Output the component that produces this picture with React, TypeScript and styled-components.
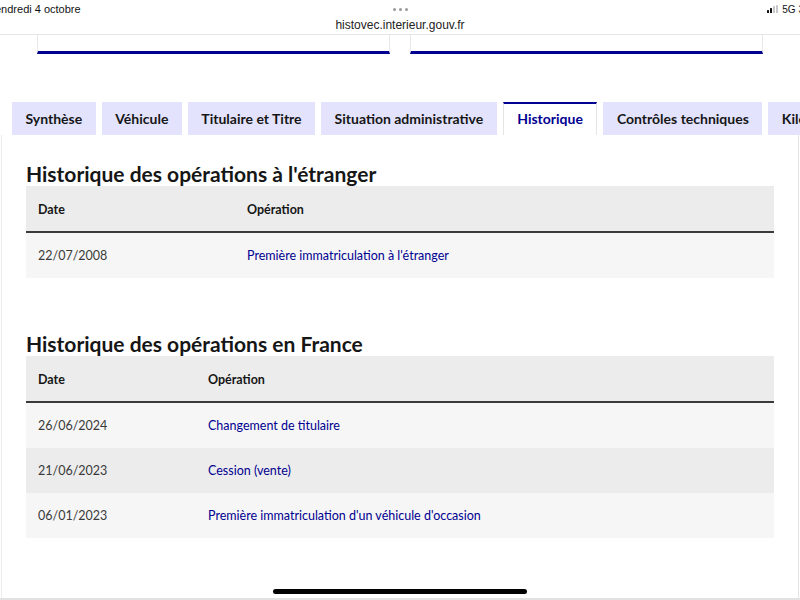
import React from "react";
import styled, { createGlobalStyle } from "styled-components";

const FONT = `"Lato", "Noto Sans", "Liberation Sans", sans-serif`;
const BLUE = "#000091";

const Global = createGlobalStyle`
  html, body { margin: 0; padding: 0; background: #fff; }
  body { width: 800px; height: 600px; overflow: hidden; font-family: ${FONT}; }
`;

const Screen = styled.div`
  position: relative;
  width: 800px;
  height: 600px;
  overflow: hidden;
  background: #fff;
  display: flex;
  flex-direction: column;
`;

const StatusBar = styled.div`
  height: 35px;
  box-sizing: border-box;
  border-bottom: 1px solid #e6e6e6;
  display: grid;
  grid-template-columns: 1fr auto 1fr;
  grid-template-rows: 18px 17px;
  font-family: "Liberation Sans", Arial, sans-serif;
  color: #111;
`;

const Clock = styled.div`
  font-size: 11px;
  line-height: 18px;
  margin-left: -5px;
`;

const Dots = styled.div`
  display: flex;
  gap: 3px;
  align-items: center;
  justify-content: center;
  height: 18px;
  span {
    width: 3px;
    height: 3px;
    border-radius: 50%;
    background: #9a9a9a;
  }
`;

const Signal = styled.div`
  display: flex;
  justify-content: flex-end;
  align-items: center;
  gap: 4px;
  height: 18px;
  font-size: 10px;
  margin-right: -4px;
`;

const Bars = styled.div`
  display: flex;
  align-items: flex-end;
  gap: 1px;
  height: 8px;
`;

const Bar = styled.i<{ $h: number; $on: boolean }>`
  display: block;
  width: 2px;
  height: ${(p) => p.$h}px;
  border-radius: 0.5px;
  background: ${(p) => (p.$on ? "#111" : "#c8c8c8")};
`;

const Url = styled.div`
  grid-column: 1 / 4;
  text-align: center;
  font-size: 12px;
  line-height: 14px;
  color: #222;
`;

const Cards = styled.div`
  display: flex;
  gap: 20px;
  padding-left: 37px;
`;

const Card = styled.div`
  width: 351px;
  height: 16px;
  border-left: 1px solid #e8e8e8;
  border-right: 1px solid #e8e8e8;
  border-bottom: 3px solid ${BLUE};
`;

const TabList = styled.div`
  display: flex;
  gap: 6px;
  padding-left: 12px;
  margin-top: 48px;
  height: 32px;
  white-space: nowrap;
`;

const Tab = styled.div<{ $active?: boolean }>`
  flex: none;
  box-sizing: border-box;
  height: 33px;
  padding: 0 13.5px 3px;
  display: flex;
  align-items: center;
  font-size: 14px;
  font-weight: 700;
  color: ${(p) => (p.$active ? BLUE : "#161616")};
  background: ${(p) => (p.$active ? "#fff" : "#e3e3fd")};
  border-top: 2px solid ${(p) => (p.$active ? BLUE : "transparent")};
  border-left: ${(p) => (p.$active ? "1px solid #e5e5e5" : "none")};
  border-right: ${(p) => (p.$active ? "1px solid #e5e5e5" : "none")};
  position: relative;
  z-index: 1;
`;

const Panel = styled.div`
  flex: 1;
  margin-top: 1px;
  margin-left: 1px;
  margin-right: 1px;
  border-left: 1px solid #ececec;
  border-right: 1px solid #e4e4e4;
  padding: 26px 24px 0 24px;
`;

const Heading = styled.h2<{ $gap?: number }>`
  margin: ${(p) => p.$gap ?? 0}px 0 0;
  font-size: 21px;
  line-height: 25px;
  font-weight: 700;
  color: #161616;
`;

const Table = styled.table`
  width: 100%;
  border-collapse: collapse;
  font-size: 12.5px;
`;

const Th = styled.th<{ $w?: number }>`
  height: 46px;
  box-sizing: border-box;
  padding: 2px 12px 0;
  text-align: left;
  font-weight: 700;
  color: #161616;
  background: #ececec;
  border-bottom: 2px solid #3a3a3a;
  width: ${(p) => (p.$w ? `${p.$w}px` : "auto")};
`;

const Tr = styled.tr<{ $alt?: boolean }>`
  background: ${(p) => (p.$alt ? "#ececec" : "#f6f6f6")};
`;

const Td = styled.td`
  height: 45px;
  padding: 0 12px;
  color: #3a3a3a;
`;

const Link = styled.a`
  color: ${BLUE};
  text-decoration: none;
`;

const HomeIndicator = styled.div`
  position: absolute;
  left: 273px;
  bottom: 6px;
  width: 254px;
  height: 5px;
  border-radius: 3px;
  background: #000;
`;

const BottomEdge = styled.div`
  position: absolute;
  left: 0;
  right: 0;
  bottom: 0;
  height: 2px;
  background: #e2e2e2;
`;

type Op = { date: string; label: string };

const abroad: Op[] = [{ date: "22/07/2008", label: "Première immatriculation à l'étranger" }];
const france: Op[] = [
  { date: "26/06/2024", label: "Changement de titulaire" },
  { date: "21/06/2023", label: "Cession (vente)" },
  { date: "06/01/2023", label: "Première immatriculation d'un véhicule d'occasion" },
];

const tabs = [
  "Synthèse",
  "Véhicule",
  "Titulaire et Titre",
  "Situation administrative",
  "Historique",
  "Contrôles techniques",
  "Kilométrage",
];

function OpsTable({ rows, dateWidth }: { rows: Op[]; dateWidth: number }) {
  return (
    <Table>
      <thead>
        <tr>
          <Th $w={dateWidth}>Date</Th>
          <Th>Opération</Th>
        </tr>
      </thead>
      <tbody>
        {rows.map((r, i) => (
          <Tr key={r.date + r.label} $alt={i % 2 === 1}>
            <Td>{r.date}</Td>
            <Td>
              <Link href="#">{r.label}</Link>
            </Td>
          </Tr>
        ))}
      </tbody>
    </Table>
  );
}

export default function App() {
  return (
    <Screen>
      <Global />
      <StatusBar>
        <Clock>endredi 4 octobre</Clock>
        <Dots>
          <span />
          <span />
          <span />
        </Dots>
        <Signal>
          <Bars>
            <Bar $h={3} $on />
            <Bar $h={5} $on />
            <Bar $h={7} $on={false} />
            <Bar $h={8} $on={false} />
          </Bars>
          <span>5G 3</span>
        </Signal>
        <Url>histovec.interieur.gouv.fr</Url>
      </StatusBar>
      <Cards>
        <Card />
        <Card />
      </Cards>
      <TabList>
        {tabs.map((t) => (
          <Tab key={t} $active={t === "Historique"}>
            {t}
          </Tab>
        ))}
      </TabList>
      <Panel>
        <Heading>Historique des opérations à l'étranger</Heading>
        <OpsTable rows={abroad} dateWidth={209} />
        <Heading $gap={53}>Historique des opérations en France</Heading>
        <OpsTable rows={france} dateWidth={170} />
      </Panel>
      <HomeIndicator />
      <BottomEdge />
    </Screen>
  );
}
